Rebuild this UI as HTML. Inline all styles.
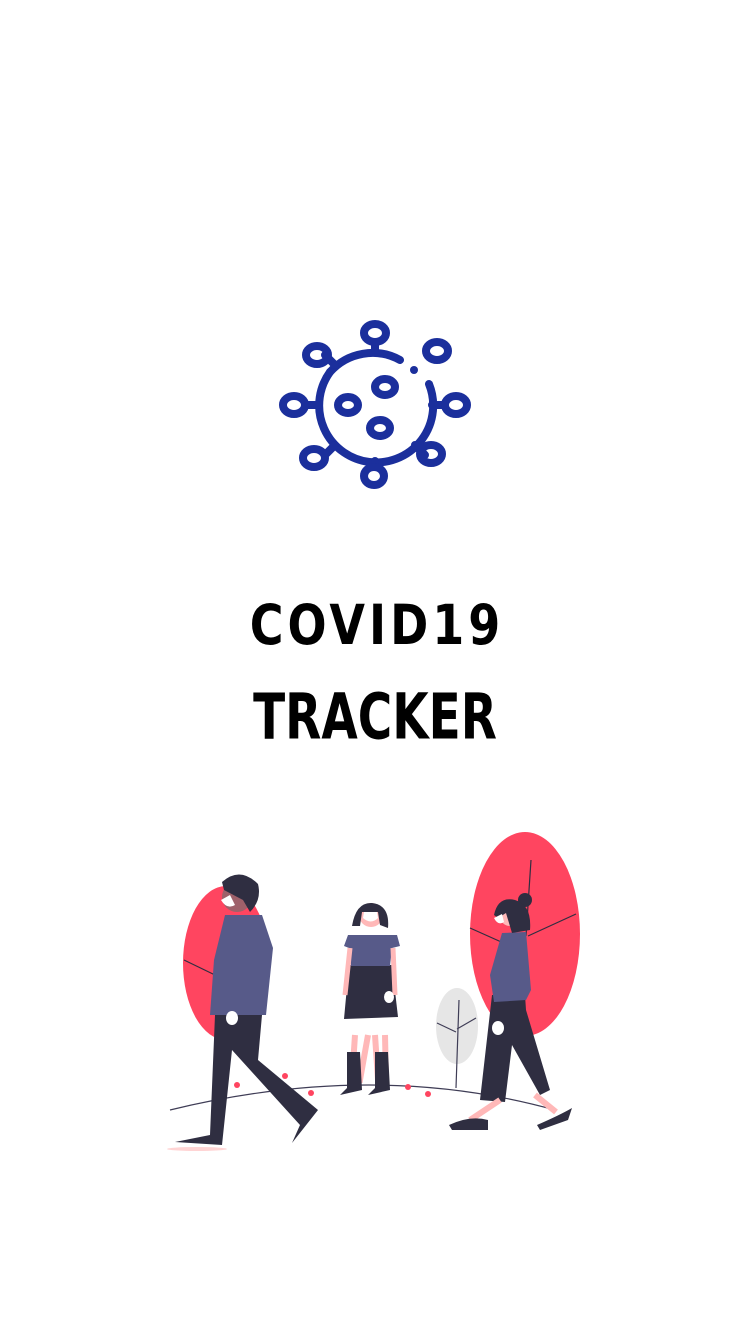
<!DOCTYPE html>
<html><head><meta charset="utf-8"><style>
html,body{margin:0;padding:0;background:#fff;width:750px;height:1334px;overflow:hidden}
.t{position:absolute;left:0;width:750px;text-align:center;font-family:"DejaVu Sans","Liberation Sans",sans-serif;font-weight:bold;color:#000;transform-origin:50% 0}
</style></head><body>
<svg width="750" height="1334" style="position:absolute;left:0;top:0">
<g fill="none" stroke="#1b2f9c" stroke-width="8" stroke-linecap="round">
<path d="M400 360 A57 57 0 0 0 330 372"/>
<path d="M429 384 A57 57 0 1 1 330 372"/>
<path d="M375 344 V350 M375 461 V467 M318 405 H305 M432 405 H445 M335 365 L325 355 M415 445 L425 455 M335 445 L325 455"/>
<ellipse cx="375" cy="333" rx="11" ry="9"/>
<ellipse cx="437" cy="351" rx="11" ry="9"/>
<ellipse cx="317" cy="355" rx="11" ry="9"/>
<ellipse cx="294" cy="405" rx="11" ry="9"/>
<ellipse cx="456" cy="405" rx="11" ry="9"/>
<ellipse cx="314" cy="458" rx="11" ry="9"/>
<ellipse cx="431" cy="454" rx="11" ry="9"/>
<ellipse cx="374" cy="476" rx="10" ry="9"/>
<ellipse cx="385" cy="387" rx="10" ry="8"/>
<ellipse cx="348" cy="405" rx="10" ry="8"/>
<ellipse cx="380" cy="428" rx="10" ry="8"/>
</g>
<circle cx="414" cy="370" r="4" fill="#1b2f9c"/>
<ellipse cx="226" cy="963" rx="43" ry="77" fill="#ff4560"/>
<ellipse cx="525" cy="934" rx="55" ry="102" fill="#ff4560"/>
<path d="M531 860 L526 936 M470 928 L508 945 M576 914 L528 936 M184 960 L215 975" stroke="#2f2e41" stroke-width="1.2"/>
<ellipse cx="457" cy="1026" rx="21" ry="38" fill="#e6e6e6"/>
<path d="M459 1000 L456 1088 M437 1023 L456 1032 M476 1018 L457 1029" stroke="#3f3d56" stroke-width="1.2" fill="none"/>
<path d="M170 1110 Q375 1060 555 1110" stroke="#3f3d56" stroke-width="1.2" fill="none"/>
<g fill="#ff4560"><circle cx="285" cy="1076" r="3"/><circle cx="311" cy="1093" r="3"/><circle cx="408" cy="1087" r="3"/><circle cx="428" cy="1094" r="3"/><circle cx="237" cy="1085" r="3"/></g>
<g>
<path d="M215 1015 L210 1135 L175 1142 L222 1145 L232 1050 L300 1125 L292 1143 L318 1110 L258 1060 L262 1015Z" fill="#2f2e41"/>
<path d="M225 915 L262 915 L273 948 L266 1015 L210 1015 L214 960Z" fill="#575a89"/>
<circle cx="237" cy="897" r="15" fill="#9e616a"/>
<path d="M222 882 Q240 866 258 884 Q262 900 250 912 L243 900 L224 890Z" fill="#2f2e41"/>
<path d="M221 900 Q227 910 235 905 L230 895Z" fill="#fff"/>
<ellipse cx="232" cy="1018" rx="6" ry="7" fill="#fff"/>
<ellipse cx="197" cy="1149" rx="30" ry="2" fill="#ffb8b8" opacity=".6"/>
</g>
<g>
<path d="M355 1035 L352 1080 L360 1080 L368 1035 M375 1035 L378 1080 L386 1080 L385 1035" stroke="#ffb8b8" stroke-width="6" fill="none"/>
<path d="M347 1052 L360 1052 L362 1090 L340 1095 L347 1088Z M375 1052 L388 1052 L390 1090 L368 1095 L375 1088Z" fill="#2f2e41"/>
<path d="M349 965 L392 965 L398 1017 L344 1019Z" fill="#2f2e41"/>
<path d="M348 935 L397 935 L400 946 L392 948 L390 966 L351 966 L349 948 L344 946Z" fill="#575a89"/>
<path d="M350 948 L345 995 M393 948 L395 995" stroke="#ffb8b8" stroke-width="5"/>
<circle cx="371" cy="915" r="12" fill="#ffb8b8"/>
<path d="M352 926 Q356 902 372 903 Q390 905 388 928 L380 925 L378 912 L362 912 L360 926Z" fill="#2f2e41"/>
<path d="M363 918 Q371 925 378 918 L377 912 L364 912Z" fill="#fff"/>
<ellipse cx="389" cy="997" rx="5" ry="6" fill="#fff"/>
</g>
<g>
<path d="M492 995 L480 1100 L505 1102 L512 1045 L540 1095 L550 1090 L526 1010 L525 995Z" fill="#2f2e41"/>
<path d="M500 1100 L470 1120 M535 1095 L556 1112" stroke="#ffb8b8" stroke-width="6"/>
<path d="M449 1125 Q470 1115 488 1120 L488 1130 L452 1130Z M537 1125 Q560 1115 572 1108 L568 1120 L540 1130Z" fill="#2f2e41"/>
<path d="M502 933 L526 932 L531 990 L526 1000 L494 1002 L490 975Z" fill="#575a89"/>
<circle cx="510" cy="916" r="10" fill="#ffb8b8"/>
<circle cx="525" cy="900" r="7" fill="#2f2e41"/>
<path d="M494 915 Q498 896 515 900 Q532 905 530 930 L512 933 L506 913 L498 918Z" fill="#2f2e41"/>
<path d="M494 918 Q498 926 504 922 L502 914Z" fill="#fff"/>
<ellipse cx="498" cy="1028" rx="6" ry="7" fill="#fff"/>
</g>
</svg>
<div class="t" style="top:597px;font-size:46px;line-height:46px;letter-spacing:4px;text-indent:4px;transform:scaleY(1.2)">COVID19</div>
<div class="t" style="top:686px;font-size:47px;line-height:47px;transform:scaleY(1.35)">TRACKER</div>
</body></html>
